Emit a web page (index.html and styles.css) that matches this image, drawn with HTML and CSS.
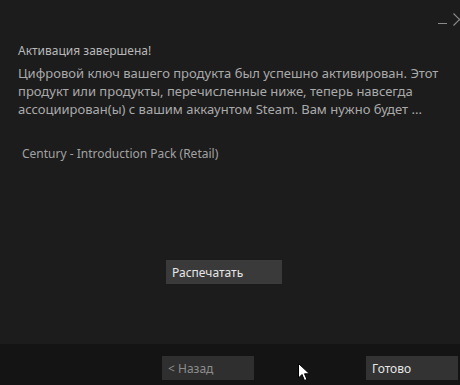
FILE: index.html
```html
<!DOCTYPE html>
<html lang="ru">
<head>
<meta charset="utf-8">
<link rel="stylesheet" href="styles.css">
</head>
<body>
<div class="window">
  <div class="titlebar">
    <svg class="controls" width="36" height="24" viewBox="0 0 36 24">
      <line x1="6" y1="15.5" x2="15" y2="15.5" stroke="#8a8a8a" stroke-width="1"/>
      <path d="M21.5 5.5 L33.5 17.5 M33.5 5.5 L21.5 17.5" stroke="#8a8a8a" stroke-width="1.2" fill="none"/>
    </svg>
  </div>
  <div class="content">
    <div class="title">Активация завершена!</div>
    <p class="desc">Цифровой ключ вашего продукта был успешно активирован. Этот продукт или продукты, перечисленные ниже, теперь навсегда ассоциирован(ы) с вашим аккаунтом Steam. Вам нужно будет ...</p>
    <div class="product">Century - Introduction Pack (Retail)</div>
    <div class="print-row"><button class="btn print">Распечатать</button></div>
  </div>
  <div class="footer">
    <button class="btn back">&lt; Назад</button>
    <button class="btn done">Готово</button>
  </div>
  <svg class="cursor" width="14" height="20" viewBox="0 0 14 20">
    <path d="M0.5 0.5 L0.5 15 L4 11.5 L6.5 17.5 L9 16.5 L6.5 10.8 L11.5 10.8 Z" fill="#fff" stroke="#000" stroke-width="1"/>
  </svg>
</div>
</body>
</html>
```

FILE: styles.css
```css
html, body {
  margin: 0;
  padding: 0;
  background: #1c1c1c;
}
.window {
  position: relative;
  width: 460px;
  height: 385px;
  overflow: hidden;
  display: flex;
  flex-direction: column;
  font-family: "Noto Sans", "Open Sans", sans-serif;
  font-size: 12px;
  line-height: 18px;
}
.titlebar {
  position: relative;
  height: 42px;
}
.controls {
  position: absolute;
  top: 8px;
  left: 432px;
}
.content {
  flex: 1;
  padding: 0 18px;
}
.title {
  color: #b8b8b8;
  font-size: 12px;
}
.desc {
  margin: 4px 0 0;
  font-size: 13px;
  color: #aaaaaa;
}
.product {
  margin-top: 27px;
  padding-left: 4px;
  color: #a2a2a2;
}
.print-row {
  margin-top: 97px;
  padding-left: 148px;
}
.btn {
  display: block;
  border: none;
  height: 24px;
  width: 92px;
  padding: 0 0 0 6px;
  text-align: left;
  font-family: inherit;
  font-size: 12px;
  color: #e6e6e6;
  background: #333333;
}
.print {
  width: 116px;
  background: #3a3a3a;
}
.footer {
  height: 41px;
  box-sizing: border-box;
  background: #141414;
  display: flex;
  padding: 12px 0 0 162px;
  gap: 112px;
}
.back {
  color: #8c8c8c;
  background: #2f2f2f;
}
.done {
  background: #333333;
}
.cursor {
  position: absolute;
  left: 298px;
  top: 363px;
}
```
